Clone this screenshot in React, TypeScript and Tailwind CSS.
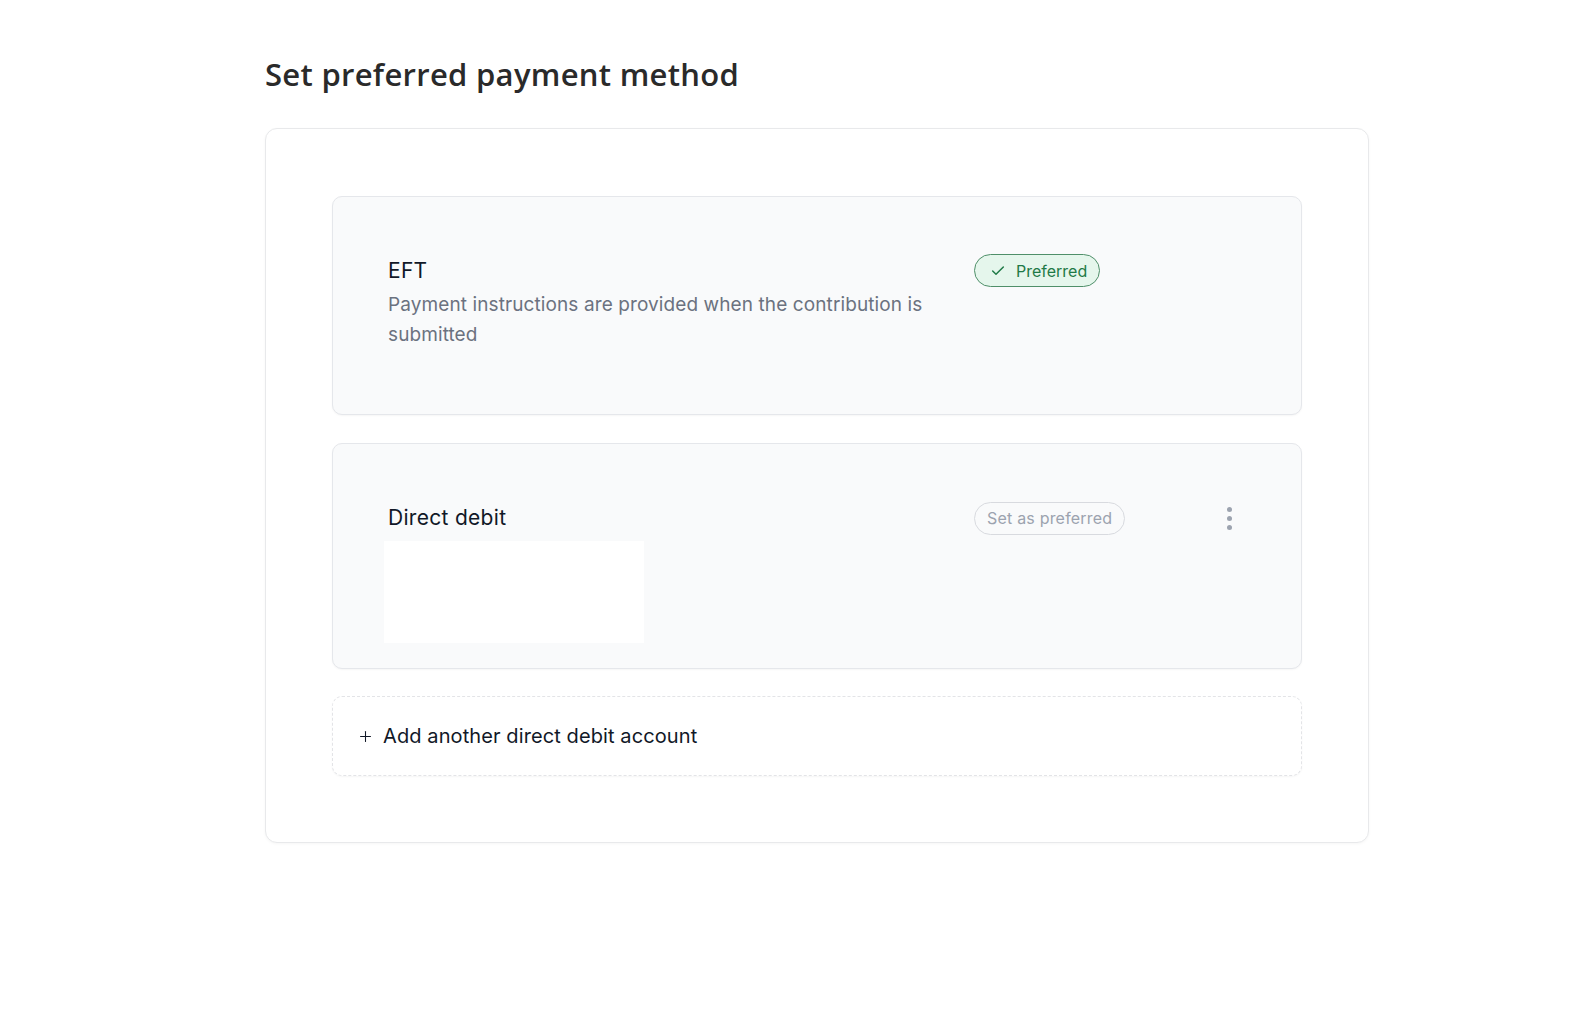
import { Check, Plus } from 'lucide-react';

const body = { fontFamily: 'Inter, "Noto Sans", sans-serif' };

function MoreDots() {
  return (
    <button className="flex h-[34px] w-[20px] flex-col items-center justify-center gap-[4px]">
      <span className="h-[5px] w-[5px] rounded-full bg-[#9ca3af]" />
      <span className="h-[5px] w-[5px] rounded-full bg-[#9ca3af]" />
      <span className="h-[5px] w-[5px] rounded-full bg-[#9ca3af]" />
    </button>
  );
}

export default function App() {
  return (
    <main className="min-h-screen bg-white pl-[265px] pr-[221px] pt-[57px]" style={body}>
      <h1
        className="text-[31px] font-semibold leading-[34px] tracking-[0.3px] text-[#2a2a2a]"
        style={{ fontFamily: '"Open Sans", "Noto Sans", sans-serif' }}
      >
        Set preferred payment method
      </h1>

      <section className="mt-[37px] rounded-[12px] border border-[#e8e9eb] bg-white px-[66px] pb-[66px] pt-[67px] shadow-[0_1px_3px_rgba(0,0,0,0.04)]">
        {/* EFT */}
        <div className="rounded-[10px] border border-[#e5e7eb] bg-[#f9fafb] px-[55px] pb-[64px] pt-[57px] shadow-[0_1px_2px_rgba(0,0,0,0.04)]">
          <div className="flex items-start gap-[16px]">
            <div className="w-[570px]">
              <div className="text-[21px] leading-[34px] tracking-[0.3px] text-[#111827]">EFT</div>
              <p className="mt-[2px] text-[19px] leading-[30px] tracking-[0.1px] text-[#6b7280]">
                Payment instructions are provided when the contribution is submitted
              </p>
            </div>
            <span className="flex h-[33px] items-center gap-[10px] rounded-full border border-[#4f8f69] bg-[#e5f6ec] pl-[15px] pr-[12px] text-[16px] text-[#1f7a47]">
              <Check size={16} strokeWidth={2.2} />
              Preferred
            </span>
          </div>
        </div>

        {/* Direct debit */}
        <div className="mt-[28px] rounded-[10px] border border-[#e5e7eb] bg-[#f9fafb] px-[55px] pb-[25px] pt-[57px] shadow-[0_1px_2px_rgba(0,0,0,0.04)]">
          <div className="flex items-center">
            <div className="w-[570px] text-[21px] leading-[34px] tracking-[0.3px] text-[#111827]">Direct debit</div>
            <span className="ml-[16px] flex h-[33px] items-center rounded-full border border-[#d8dadf] px-[12px] text-[16px] tracking-[0.2px] text-[#9ca3af]">
              Set as preferred
            </span>
            <div className="ml-[94px]">
              <MoreDots />
            </div>
          </div>
          <div className="ml-[-4px] mt-[6px] h-[102px] w-[260px] bg-white" />
        </div>

        {/* Add account */}
        <button className="mt-[27px] flex h-[80px] w-full items-center gap-[9px] rounded-[10px] border border-dashed border-[#e3e4e7] bg-white pl-[24px] text-[20px] tracking-[0.1px] text-[#111827] shadow-[0_1px_2px_rgba(0,0,0,0.04)]">
          <Plus size={17} strokeWidth={1.5} />
          Add another direct debit account
        </button>
      </section>
    </main>
  );
}
